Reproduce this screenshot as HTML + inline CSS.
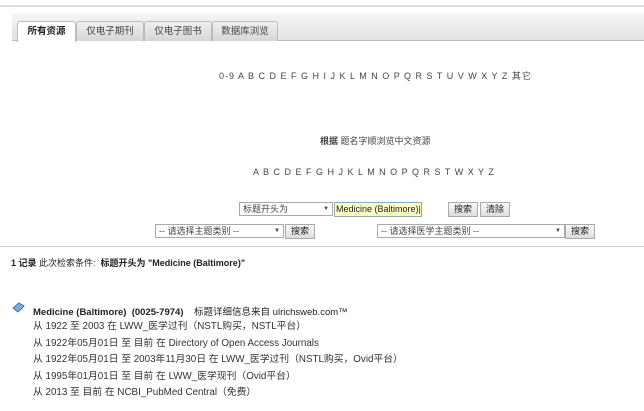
<!DOCTYPE html>
<html><head><meta charset="utf-8"><style>
body{margin:0;width:644px;height:411px;background:#fff;font-family:"Liberation Sans","Noto Sans CJK SC",sans-serif;font-size:9px;color:#222;position:relative;overflow:hidden}
.a{position:absolute;white-space:nowrap}
.tabbar{position:absolute;left:12px;top:13px;width:632px;height:27px;background:linear-gradient(#f6f6f6,#e2e2e2);border-bottom:1px solid #bbb}
.tab{position:absolute;top:8px;height:19px;line-height:19px;text-align:center;border:1px solid #bbb;border-bottom:none;background:linear-gradient(#f0f0f0,#d6d6d6);border-radius:3px 3px 0 0;font-size:9.5px;color:#444}
.tab.on{background:#fff;height:20px;font-weight:bold;color:#222}
.sel{position:absolute;height:12px;border:1px solid #aaa;background:#fff;font-size:9px;line-height:12px;padding-left:3px;box-sizing:content-box;color:#444}
.sel:after{content:"▼";position:absolute;right:3px;font-size:6px}
.btn{position:absolute;height:13px;border:1px solid #aaa;background:linear-gradient(#fafafa,#ddd);font-size:9px;line-height:13px;text-align:center}
</style></head><body>
<div class="a" style="left:0;top:5px;width:644px;height:2px;background:#ddd"></div>
<div class="tabbar">
<div class="tab on" style="left:5px;width:57px">所有资源</div>
<div class="tab" style="left:64px;width:66px">仅电子期刊</div>
<div class="tab" style="left:132px;width:66px">仅电子图书</div>
<div class="tab" style="left:200px;width:64px">数据库浏览</div>
</div>
<div class="a" style="left:219px;top:69px;color:#444;letter-spacing:1px">0-9 A B C D E F G H I J K L M N O P Q R S T U V W X Y Z 其它</div>
<div class="a" style="left:320px;top:134px;color:#444"><b>根据</b> 题名字顺浏览中文资源</div>
<div class="a" style="left:253px;top:167px;color:#444;letter-spacing:1px">A B C D E F G H J K L M N O P Q R S T W X Y Z</div>
<div class="sel" style="left:239px;top:202px;width:89px">标题开头为</div>
<div class="a" style="left:334px;top:202px;width:85px;height:13px;border:1px solid #8ab;background:#ffffc0;font-size:9px;line-height:13px;padding-left:1px">Medicine (Baltimore)|</div>
<div class="btn" style="left:448px;top:202px;width:28px">搜索</div>
<div class="btn" style="left:480px;top:202px;width:28px">清除</div>
<div class="sel" style="left:155px;top:224px;width:124px">-- 请选择主题类别 --</div>
<div class="btn" style="left:285px;top:224px;width:28px">搜索</div>
<div class="sel" style="left:377px;top:224px;width:183px">-- 请选择医学主题类别 --</div>
<div class="btn" style="left:565px;top:224px;width:28px">搜索</div>
<div class="a" style="left:0;top:246px;width:644px;height:1px;background:#ccc"></div>
<div class="a" style="left:11px;top:256px"><b>1 记录</b> 此次检索条件:&nbsp; <b>标题开头为 "Medicine (Baltimore)"</b></div>
<svg class="a" style="left:12px;top:302px" width="13" height="11"><path d="M1 6 L7 1 L12 4 L6 10 Z" fill="#7ab0e0" stroke="#3a6ea8"/></svg>
<div class="a" style="left:33px;top:304px;font-size:9.5px"><b>Medicine (Baltimore)</b>&nbsp; <b>(0025-7974)</b>&nbsp;&nbsp;&nbsp; 标题详细信息来自 ulrichsweb.com™</div>
<div class="a" style="left:33px;top:319px;line-height:16.6px;font-size:9.8px;color:#333">从 1922 至 2003 在 LWW_医学过刊（NSTL购买，NSTL平台）<br>从 1922年05月01日 至 目前 在 Directory of Open Access Journals<br>从 1922年05月01日 至 2003年11月30日 在 LWW_医学过刊（NSTL购买，Ovid平台）<br>从 1995年01月01日 至 目前 在 LWW_医学现刊（Ovid平台）<br>从 2013 至 目前 在 NCBI_PubMed Central（免费）</div>
</body></html>
